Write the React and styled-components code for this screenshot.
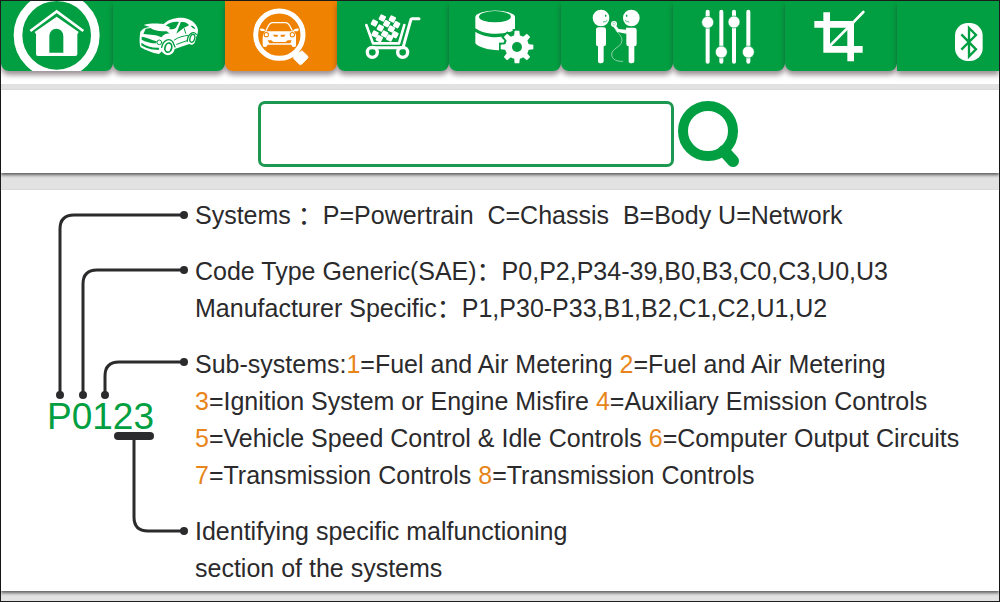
import React from 'react';
import styled, { createGlobalStyle } from 'styled-components';

const green = '#029f42';
const orange = '#ef8200';
const ink = '#2b2a2c';

const GlobalStyle = createGlobalStyle`
  *, *::before, *::after { box-sizing: border-box; }
  body {
    margin: 0;
    background: #e2e2e2;
    color: ${ink};
    font-family: "Liberation Sans", Arial, "Noto Sans CJK SC", sans-serif;
  }
`;

const Screen = styled.div`
  display: flex;
  flex-direction: column;
  min-height: 100vh;
  padding-bottom: 10px;
  border: 1px solid #1c1c1c;
  background: #e2e2e2;
`;

const Toolbar = styled.nav`
  display: flex;
  padding-bottom: 13px;
  background: #fff;
`;

const Tab = styled.button`
  flex: ${({ $last }) => ($last ? '102 1 0' : '112 1 0')};
  display: flex;
  justify-content: ${({ $last }) => ($last ? 'flex-end' : 'center')};
  min-width: 0;
  height: 70px;
  padding: 0;
  border: 0;
  border-radius: ${({ $last }) => ($last ? '0' : '0 0 8px 8px')};
  background: ${({ $active }) => ($active ? orange : green)};
  color: ${({ $active }) => ($active ? orange : green)};
  box-shadow: 0 4px 5px rgba(60, 40, 50, 0.5);
  overflow: hidden;
  cursor: pointer;
`;

const TabIcon = styled.svg`
  flex: none;
  width: ${({ $width }) => $width || 112}px;
  height: 70px;
`;

const SearchPanel = styled.form`
  display: flex;
  justify-content: center;
  align-items: flex-start;
  gap: 4px;
  margin-top: 6px;
  padding: 11px 18px 6px 16px;
  background: #fff;
  box-shadow: 0 2px 3px rgba(0, 0, 0, 0.6);
`;

const SearchInput = styled.input`
  flex: 0 1 416px;
  min-width: 0;
  height: 66px;
  padding: 0 16px;
  border: 3px solid #1c9850;
  border-radius: 7px;
  outline: none;
  background: #fff;
  color: ${ink};
  font: 25px "Liberation Sans", Arial, sans-serif;
`;

const SearchButton = styled.button`
  flex: none;
  width: 62px;
  height: 66px;
  padding: 0;
  border: 0;
  background: none;
  cursor: pointer;

  svg { display: block; }
`;

const CodePanel = styled.main`
  flex: 1;
  display: flex;
  margin-top: 17px;
  background: #fff;
  box-shadow: 0 2px 3px rgba(0, 0, 0, 0.6);
`;

const Diagram = styled.svg`
  flex: none;
  width: 194px;
  height: 400px;
`;

const Notes = styled.div`
  display: flex;
  flex-direction: column;
  gap: 19px;
  padding: 7px 0 3px;
`;

const Note = styled.p`
  margin: 0;
  font-size: 25px;
  line-height: 37px;
  white-space: pre;
`;

const Digit = styled.span`
  color: #e8851a;
`;

function HomeIcon() {
  return (
    <TabIcon viewBox="3 3 336 210" aria-hidden="true">
      <circle cx="170" cy="106" r="116" fill="none" stroke="#fff" strokeWidth="26" />
      <path d="M91 93 170 34 250 93" fill="none" stroke="#fff" strokeWidth="8" />
      <path d="M104 96 170 50 236 96 232 103V162q0 6-6 6H114q-6 0-6-6V103Z" fill="#fff" />
      <path d="M148 158V108a21 22 0 0 1 42 0V158Z" fill="currentColor" />
    </TabIcon>
  );
}

function CarIcon() {
  return (
    <TabIcon viewBox="339 3 336 210" aria-hidden="true">
      <g fill="#fff">
        <path d="M421 96C425 88 436 82 450 81L431 75C448 69 476 70 491 72C503 59 530 51 553 54C577 59 592 74 594 90C594 98 592 105 588 112L586 122C584 132 576 137 568 132L524 147C522 160 509 169 497 164C490 161 487 158 486 154L477 162C456 159 438 151 422 142C418 136 418 112 421 96Z" />
      </g>
      <g fill="currentColor">
        <path d="M497 77C507 67 526 63 537 66L528 83C522 87 514 89 507 87C514 82 506 79 497 77Z" />
        <path d="M542 67C553 64 563 69 567 76L551 84 529 101Z" />
        <path d="M572 78C578 76 584 81 586 88L578 84Z" />
        <path d="M437 86 452 84C462 92 482 94 500 94L510 101C498 99 491 104 484 112C470 104 452 104 430 102Z" />
        <path d="M425 110C440 112 455 120 470 124L469 130C451 130 436 125 425 119Z" />
        <path d="M424 128C440 139 456 144 478 143L476 150C454 150 436 144 424 136Z" />
      </g>
      <g fill="none" stroke="currentColor" strokeLinecap="round">
        <path d="M523 120C537 110 549 109 563 106M530 133 561 122M553 86 557 100" strokeWidth="3" />
        <path d="M485 142C489 122 506 112 518 125L525 141" strokeWidth="4" />
        <path d="M562 124C562 103 579 91 589 103" strokeWidth="4" />
        <circle cx="478" cy="127" r="7" strokeWidth="3" />
        <ellipse cx="505" cy="143" rx="10" ry="14" transform="rotate(15 505 143)" strokeWidth="5" />
        <ellipse cx="577" cy="115" rx="7" ry="12" transform="rotate(15 577 115)" strokeWidth="4" />
      </g>
    </TabIcon>
  );
}

function DiagnoseIcon() {
  return (
    <TabIcon viewBox="15 3 336 210" aria-hidden="true">
      <circle cx="178" cy="104" r="71" fill="none" stroke="#fff" strokeWidth="15" />
      <path d="M223 161 233 151 239 157 246 152 263 168Q266 172 262 176L245 193Q241 196 237 192L220 175Z" fill="#fff" stroke="#fff" strokeWidth="2" strokeLinejoin="round" />
      <path d="M138 92C143 80 147 69 157 68H198C208 69 211 82 217 92" fill="none" stroke="#fff" strokeWidth="4" />
      <path d="M119 88Q121 84 132 87L137 94H218L224 87Q235 84 237 88L233 94 221 94Q230 103 228 116V137Q228 141 221 141 215 141 214 134H143Q141 141 135 141 128 141 128 136V113Q128 101 136 94L123 93Z" fill="#fff" />
      <g fill="currentColor">
        <path d="M141 92 149 90H208L216 93Z" />
        <circle cx="139" cy="104" r="8" />
        <circle cx="217" cy="104" r="8" />
        <path d="M158 104H173V110H164ZM182 104H197L192 110H182Z" />
        <path d="M143 121H154L160 126H197L203 121H215L211 130H148Z" />
      </g>
      <circle cx="139" cy="104" r="5" fill="#fff" />
      <circle cx="217" cy="104" r="5" fill="#fff" />
    </TabIcon>
  );
}

const boxes = [
  [487, 54], [517, 57], [463, 69], [500, 71], [530, 74], [481, 84],
  [514, 87], [465, 102], [494, 102], [525, 104], [478, 116], [509, 114],
];

function CartIcon() {
  return (
    <TabIcon viewBox="351 3 336 210" aria-hidden="true">
      <g fill="none" stroke="#fff" strokeLinecap="round" strokeLinejoin="round">
        <path d="M439 75 459 130H537L553 75" strokeWidth="8" />
        <path d="M597 56H577Q573 56 572 61L549 143H452" strokeWidth="9" />
        <circle cx="457" cy="157" r="15" strokeWidth="10" />
        <circle cx="548" cy="157" r="15" strokeWidth="10" />
      </g>
      <g fill="#fff">
        {boxes.map(([x, y]) => (
          <rect key={`${x}-${y}`} x={x - 9} y={y - 9} width="18" height="18" rx="3" transform={`rotate(28 ${x} ${y})`} />
        ))}
      </g>
    </TabIcon>
  );
}

function DatabaseIcon() {
  const teeth = [0, 45, 90, 135, 180, 225, 270, 315];
  return (
    <TabIcon viewBox="27 3 336 210" aria-hidden="true">
      <path d="M106 50A60 21 0 0 1 225 50V90C190 106 135 106 106 85Z" fill="#fff" />
      <ellipse cx="165" cy="50" rx="48" ry="17" fill="currentColor" />
      <path d="M106 95C135 114 174 114 200 108L190 150C150 153 117 143 106 130Z" fill="#fff" />
      <g stroke="currentColor" strokeWidth="12" fill="currentColor">
        <circle cx="231" cy="141" r="36" />
        {teeth.map((a) => (
          <rect key={a} x="224" y="93" width="14" height="20" transform={`rotate(${a} 231 141)`} />
        ))}
      </g>
      <g fill="#fff">
        <circle cx="231" cy="141" r="36" />
        {teeth.map((a) => (
          <path key={a} d="M222 110 224 92H238L240 110Z" transform={`rotate(${a} 231 141)`} />
        ))}
      </g>
      <circle cx="231" cy="141" r="15" fill="currentColor" />
    </TabIcon>
  );
}

function VoiceIcon() {
  return (
    <TabIcon viewBox="363 3 336 210" aria-hidden="true">
      <g fill="#fff">
        <circle cx="483" cy="54" r="25" />
        <circle cx="574" cy="54" r="25" />
        <path d="M468 90Q468 82 475 82H491Q498 82 498 90V132Q498 139 491 139V184Q491 190 483 190 474 190 474 184V139Q468 139 468 132Z" />
        <path d="M558 83H583Q590 83 590 90V132Q590 139 583 139V184Q583 190 575 190 566 190 566 184V139Q559 139 559 132V101L532 96 520 80 527 76 536 87 558 89Z" />
        <circle cx="522" cy="72" r="9" />
      </g>
      <circle cx="522" cy="71" r="4" fill="none" stroke="currentColor" strokeWidth="1" />
      <path d="M527 91C539 105 549 111 545 126C541 142 514 146 515 165C517 179 531 185 549 184" fill="none" stroke="#fff" strokeOpacity="0.8" strokeWidth="2" />
      <g fill="none" stroke="currentColor">
        <path d="M489 66Q497 66 502 61M568 66Q560 66 555 61" strokeWidth="2" />
        <path d="M497 44V50M560 44V50" strokeWidth="4" />
      </g>
    </TabIcon>
  );
}

function MixerIcon() {
  const sliders = [[143, 67], [184, 156], [222, 66], [265, 156]];
  return (
    <TabIcon viewBox="39 3 336 210" aria-hidden="true">
      {sliders.map(([x, y]) => (
        <g key={x}>
          <path d={`M${x} 35V185`} stroke="#fff" strokeWidth="12" strokeLinecap="round" />
          <circle cx={x} cy={y} r="18" fill="#fff" stroke="currentColor" strokeWidth="2" />
        </g>
      ))}
    </TabIcon>
  );
}

function CropIcon() {
  return (
    <TabIcon viewBox="375 3 336 210" aria-hidden="true">
      <g fill="none" stroke="#fff">
        <path d="M500 37V148H608M463 73H572V184" strokeWidth="20" />
        <path d="M509 138 582 65" strokeWidth="8" />
        <path d="M574 73 610 36" strokeWidth="8" strokeLinecap="round" />
      </g>
    </TabIcon>
  );
}

function BluetoothIcon() {
  return (
    <TabIcon $width={102} viewBox="711 3 306 210" aria-hidden="true">
      <rect x="885" y="69" width="83" height="114" rx="38" fill="#fff" />
      <path d="M904 103 948 148 927 169V84L948 105 904 149" fill="none" stroke="currentColor" strokeWidth="7" />
    </TabIcon>
  );
}

const tabs = [
  { name: 'Home', Icon: HomeIcon },
  { name: 'Vehicle', Icon: CarIcon },
  { name: 'Code lookup', Icon: DiagnoseIcon, active: true },
  { name: 'Shop', Icon: CartIcon },
  { name: 'Data settings', Icon: DatabaseIcon },
  { name: 'Feedback', Icon: VoiceIcon },
  { name: 'Adjustments', Icon: MixerIcon },
  { name: 'Crop', Icon: CropIcon },
  { name: 'Bluetooth', Icon: BluetoothIcon, last: true },
];

function CodeDiagram() {
  return (
    <Diagram viewBox="1 190 194 400">
      <g fill="none" stroke={ink} strokeWidth="3">
        <path d="M60 395V229Q60 215 74 215H184" />
        <path d="M83 395V284Q83 270 97 270H184" />
        <path d="M105 395V376Q105 362 119 362H184" />
        <path d="M134 436V517Q134 531 148 531H184" />
      </g>
      <path d="M118 436H150" stroke={ink} strokeWidth="8" strokeLinecap="round" />
      <g fill={ink}>
        {[[60, 395], [83, 395], [105, 395], [184, 215], [184, 270], [184, 362], [184, 531]].map(([x, y]) => (
          <circle key={`${x}-${y}`} cx={x} cy={y} r="4" />
        ))}
      </g>
      <text x="47" y="429" fontSize="37" fill={green}>P0123</text>
    </Diagram>
  );
}

export default function App() {
  return (
    <>
      <GlobalStyle />
      <Screen>
        <Toolbar aria-label="Main">
          {tabs.map(({ name, Icon, active, last }) => (
            <Tab key={name} type="button" aria-label={name} $active={active} $last={last}>
              <Icon />
            </Tab>
          ))}
        </Toolbar>
        <SearchPanel role="search" onSubmit={(e) => e.preventDefault()}>
          <SearchInput type="text" aria-label="Trouble code" />
          <SearchButton type="submit" aria-label="Search">
            <svg width="62" height="66" viewBox="0 0 62 66" fill="none" stroke={green}>
              <circle cx="30" cy="30" r="25" strokeWidth="10" />
              <path d="M46 50 55 60" strokeWidth="12" strokeLinecap="round" />
            </svg>
          </SearchButton>
        </SearchPanel>
        <CodePanel>
          <CodeDiagram />
          <Notes>
            <Note>{'Systems ：P=Powertrain  C=Chassis  B=Body U=Network'}</Note>
            <Note>
              {'Code Type Generic(SAE)：P0,P2,P34-39,B0,B3,C0,C3,U0,U3\n'}
              {'Manufacturer Specific：P1,P30-P33,B1,B2,C1,C2,U1,U2'}
            </Note>
            <Note>
              Sub-systems:<Digit>1</Digit>=Fuel and Air Metering <Digit>2</Digit>{'=Fuel and Air Metering\n'}
              <Digit>3</Digit>=Ignition System or Engine Misfire <Digit>4</Digit>{'=Auxiliary Emission Controls\n'}
              <Digit>5</Digit>{'=Vehicle Speed Control & Idle Controls '}<Digit>6</Digit>{'=Computer Output Circuits\n'}
              <Digit>7</Digit>=Transmission Controls <Digit>8</Digit>=Transmission Controls
            </Note>
            <Note>{'Identifying specific malfunctioning\nsection of the systems'}</Note>
          </Notes>
        </CodePanel>
      </Screen>
    </>
  );
}
